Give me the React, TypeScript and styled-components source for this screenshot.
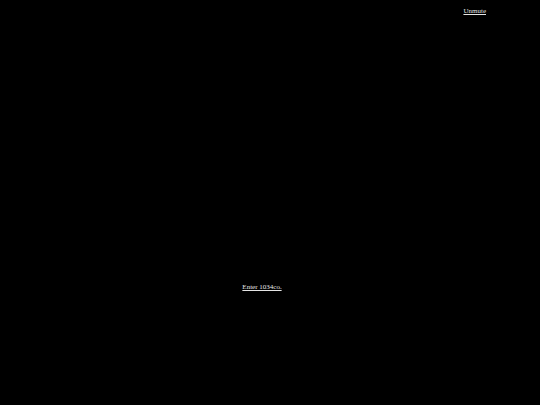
import styled, { createGlobalStyle } from "styled-components";

const GlobalStyle = createGlobalStyle`
  html, body {
    margin: 0;
    padding: 0;
    background: #000;
  }
`;

const Page = styled.div`
  width: 540px;
  height: 405px;
  background: #000;
  display: flex;
  flex-direction: column;
  font-family: "Liberation Serif", "Times New Roman", serif;
  font-size: 7px;
  line-height: 9px;
  color: #e6e6e6;
`;

const TopBar = styled.div`
  display: flex;
  justify-content: flex-end;
  padding: 7px 54px 0 0;
`;

const Link = styled.a`
  color: #e6e6e6;
  text-decoration: underline;
  cursor: pointer;
`;

const Center = styled.div`
  display: flex;
  justify-content: center;
  padding: 267px 0 0 0;
  margin-right: 16px;
`;

export default function App() {
  return (
    <>
      <GlobalStyle />
      <Page>
        <TopBar>
          <Link>Unmute</Link>
        </TopBar>
        <Center>
          <Link>Enter 1034co.</Link>
        </Center>
      </Page>
    </>
  );
}
